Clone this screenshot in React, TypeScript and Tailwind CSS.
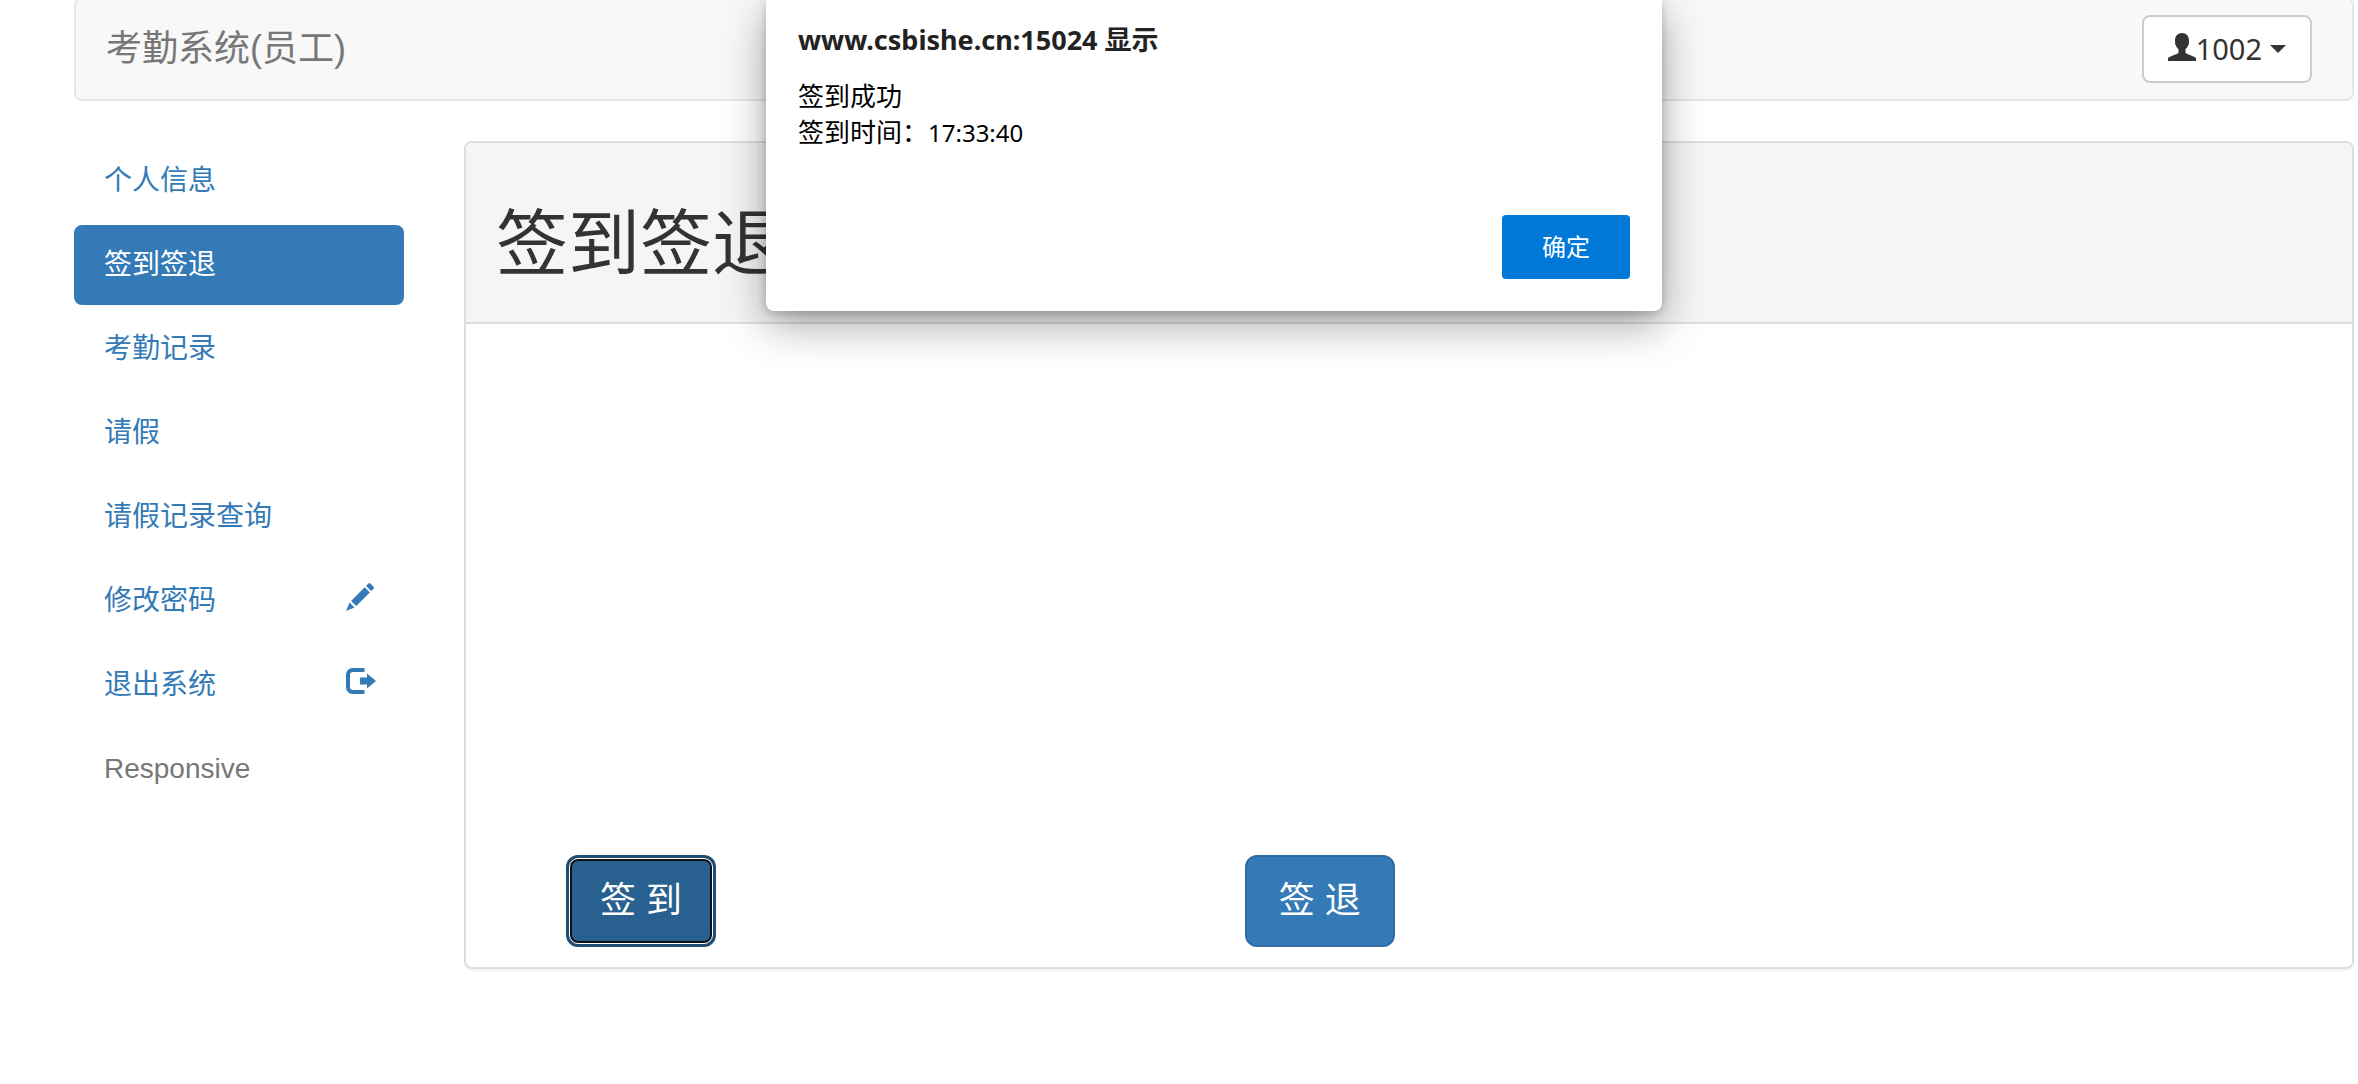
import { useState } from "react";
import type { ReactNode } from "react";

//Iconos
function UserIcon({ className }: { className?: string }) {
  return (
    <svg viewBox="0 0 28 28" className={className} fill="currentColor" aria-hidden="true">
      <path d="M14 0C9.8 0 7 3.2 7 7.2c0 .9.1 1.700.3 2.400C6.800 9.900 6.900 11.600 7.800 12.100c.5 1.900 1.500 3.200 2.700 4.100v3.300c0 .5-.3.9-.8 1.100L1.400 24.100C.5 24.500 0 25 0 25.900V28h28v-2.100c0-.9-.5-1.400-1.400-1.800l-8.300-3.500c-.5-.2-.8-.6-.8-1.100v-3.300c1.200-.9 2.200-2.200 2.700-4.100.9-.5 1-2.200.5-2.500.2-.7.3-1.500.3-2.400C21 3.200 18.200 0 14 0z" />
    </svg>
  );
}

function PencilIcon({ className }: { className?: string }) {
  return (
    <svg viewBox="0 0 30 28" className={className} fill="currentColor" aria-hidden="true">
      <path d="M22.400.6a1.400 1.400 0 0 1 2 0l3.100 3.100a1.400 1.400 0 0 1 0 2L25.200 8 20.100 2.900z" />
      <path d="M18.700 4.300l5.100 5.100L10.200 23 5.100 17.900z" />
      <path d="M3.500 19.600l5 5L0 28z" />
    </svg>
  );
}

function LogOutIcon({ className }: { className?: string }) {
  return (
    <svg viewBox="0 0 30 28" className={className} fill="currentColor" aria-hidden="true">
      <path d="M6.500 1H18.500V5H7a3 3 0 0 0-3 3v12a3 3 0 0 0 3 3h11.500v4H6.500A6.500 6.500 0 0 1 0 20.500v-13A6.500 6.500 0 0 1 6.500 1z" />
      <path d="M21 6.500l9 7.500-9 7.500V17.500h-7v-7h7z" />
    </svg>
  );
}

//Opciones del menu lateral
const menu: { label: string; icon?: ReactNode }[] = [
  { label: "个人信息" },
  { label: "签到签退" },
  { label: "考勤记录" },
  { label: "请假" },
  { label: "请假记录查询" },
  { label: "修改密码", icon: <PencilIcon className="mt-0.5 h-7 w-[30px]" /> },
  { label: "退出系统", icon: <LogOutIcon className="mt-0.5 h-7 w-[30px]" /> },
];

export default function App() {
  const [activo, setActivo] = useState("签到签退");
  const [alerta, setAlerta] = useState(true);

  return (
    <div className="min-h-screen bg-white pl-[74px] pr-1 font-['Liberation_Sans','Noto_Sans_CJK_SC',sans-serif] text-[28px] leading-10 text-[#333]">
      {/* Barra superior */}
      <header className="-mt-[3px] flex items-center justify-between rounded-lg border-2 border-[#e7e7e7] bg-[#f8f8f8] py-4 pl-[30px] pr-10">
        <a href="#" className="text-[36px] text-[#777]">
          考勤系统(员工)
        </a>
        <button
          type="button"
          className="flex items-center rounded-lg border-2 border-[#ccc] bg-white px-6 py-3 font-['Noto_Sans',sans-serif] text-[29px]"
        >
          <UserIcon className="mb-1 size-7" />
          1002
          <span className="ml-2 border-x-8 border-t-8 border-x-transparent border-t-[#333]" />
        </button>
      </header>

      <div className="mt-10 flex items-start gap-[60px]">
        {/* Menu lateral */}
        <nav className="w-[330px] shrink-0">
          <ul className="flex flex-col gap-1">
            {menu.map((item) => (
              <li key={item.label}>
                <a
                  href="#"
                  onClick={() => setActivo(item.label)}
                  className={`flex justify-between rounded-lg py-5 pl-[30px] pr-7 ${
                    activo === item.label ? "bg-[#337ab7] text-white" : "text-[#337ab7]"
                  }`}
                >
                  {item.label}
                  {item.icon}
                </a>
              </li>
            ))}
            <li className="px-[30px] py-5 text-[#777]">Responsive</li>
          </ul>
        </nav>

        {/* Panel principal */}
        <main className="grow rounded-lg border-2 border-[#ddd] bg-white shadow-[0_2px_2px_rgba(0,0,0,0.05)]">
          <div className="rounded-t-md border-b-2 border-[#ddd] bg-[#f5f5f5] px-[30px] pb-[38px] pt-[62px]">
            <h1 className="text-[72px] leading-[79px]">签到签退</h1>
          </div>
          <div className="flex pb-5 pl-[100px] pt-[531px] text-[36px] leading-[48px] text-white">
            <div className="w-[38%]">
              <button
                type="button"
                onClick={() => setAlerta(true)}
                className="rounded-xl border-2 border-[#204d74] bg-[#286090] px-8 py-5 shadow-[inset_0_0_0_4px_#101010] outline-1 -outline-offset-4 outline-white ring-2 ring-inset ring-[#204d74]"
              >
                签&nbsp;到
              </button>
            </div>
            <button type="button" className="rounded-xl border-2 border-[#2e6da4] bg-[#337ab7] px-8 py-5">
              签&nbsp;退
            </button>
          </div>
        </main>
      </div>

      {/* Aviso */}
      {alerta && (
        <div
          role="alertdialog"
          aria-labelledby="aviso-titulo"
          className="absolute left-[766px] top-0 w-[896px] rounded-b-lg bg-white px-8 pb-8 pt-[22px] font-['Noto_Sans','Noto_Sans_CJK_SC',sans-serif] text-[26px] leading-9 text-black shadow-[0_14px_44px_rgba(0,0,0,0.35),0_2px_10px_rgba(0,0,0,0.2)]"
        >
          <h2 id="aviso-titulo" className="text-[27px] font-bold text-[#222]">
            www.csbishe.cn:15024 显示
          </h2>
          <p className="mt-5">签到成功</p>
          <p>
            签到时间：<span className="text-2xl">17:33:40</span>
          </p>
          <div className="mt-[65px] flex justify-end">
            <button
              type="button"
              onClick={() => setAlerta(false)}
              className="h-16 w-32 rounded-sm bg-[#0078d7] text-2xl text-white"
            >
              确定
            </button>
          </div>
        </div>
      )}
    </div>
  );
}
